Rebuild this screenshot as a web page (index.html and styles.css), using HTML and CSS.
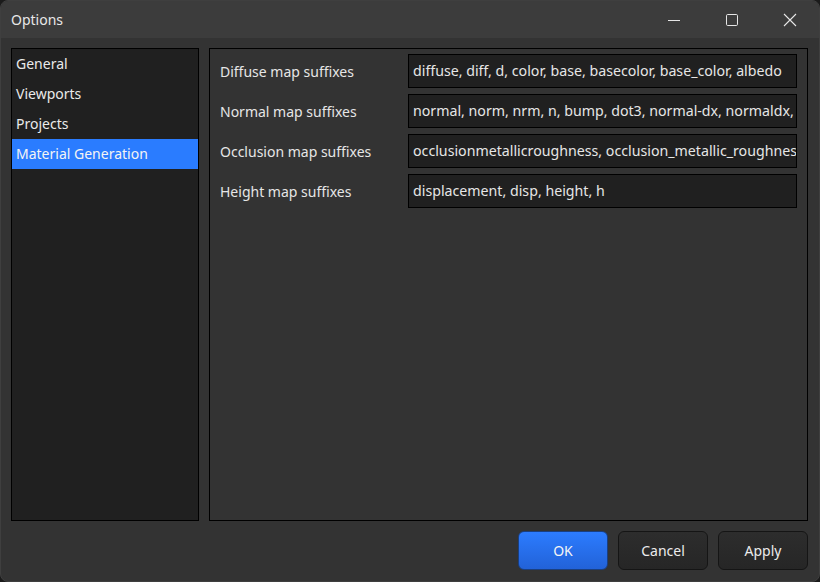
FILE: index.html
```html
<!DOCTYPE html>
<html>
<head>
<meta charset="utf-8">
<link rel="stylesheet" href="styles.css">
</head>
<body>
<div class="window">
  <div class="titlebar">
    <span class="title">Options</span>
    <div class="controls">
      <span class="ctl"><svg width="14" height="14" viewBox="0 0 14 14"><path d="M1 7.5H13" stroke="#e6e6e6" stroke-width="1" fill="none"/></svg></span>
      <span class="ctl"><svg width="14" height="14" viewBox="0 0 14 14"><rect x="1.5" y="1.5" width="11" height="11" rx="1.2" stroke="#e6e6e6" stroke-width="1" fill="none"/></svg></span>
      <span class="ctl"><svg width="14" height="14" viewBox="0 0 14 14"><path d="M1 1L13 13M13 1L1 13" stroke="#e6e6e6" stroke-width="1.1" fill="none"/></svg></span>
    </div>
  </div>
  <div class="content">
    <ul class="nav">
      <li>General</li>
      <li>Viewports</li>
      <li>Projects</li>
      <li class="selected">Material Generation</li>
    </ul>
    <div class="panel">
      <div class="form">
        <label>Diffuse map suffixes</label>
        <div class="field">diffuse, diff, d, color, base, basecolor, base_color, albedo</div>
        <label>Normal map suffixes</label>
        <div class="field">normal, norm, nrm, n, bump, dot3, normal-dx, normaldx, normal_dx</div>
        <label>Occlusion map suffixes</label>
        <div class="field">occlusionmetallicroughness, occlusion_metallic_roughness, orm</div>
        <label>Height map suffixes</label>
        <div class="field">displacement, disp, height, h</div>
      </div>
    </div>
  </div>
  <div class="footer">
    <button class="btn primary">OK</button>
    <button class="btn">Cancel</button>
    <button class="btn">Apply</button>
  </div>
</div>
</body>
</html>
```
FILE: styles.css
```css
html, body {
  margin: 0;
  padding: 0;
  background: #1b1b1b;
}
body {
  font-family: "Noto Sans", "Open Sans", sans-serif;
  font-size: 14px;
  color: #e6e6e6;
}
.window {
  width: 820px;
  height: 582px;
  box-sizing: border-box;
  background: #333333;
  border-radius: 8px;
  overflow: hidden;
  display: flex;
  flex-direction: column;
  border: 1px solid #3f3f3f;
}
.titlebar {
  height: 37px;
  background: #3c3c3c;
  display: flex;
  align-items: center;
  justify-content: space-between;
  padding-left: 10px;
  flex: none;
}
.title {
  font-size: 14px;
  color: #e8e8e8;
}
.controls {
  display: flex;
  height: 100%;
}
.ctl {
  width: 58px;
  display: flex;
  align-items: center;
  justify-content: center;
}
.content {
  flex: 1;
  display: flex;
  gap: 10px;
  padding: 10px 11px 0 10px;
  min-height: 0;
}
.nav {
  list-style: none;
  margin: 0;
  padding: 0;
  width: 188px;
  box-sizing: border-box;
  background: #202020;
  border: 1px solid #000;
  flex: none;
}
.nav li {
  height: 30px;
  line-height: 30px;
  padding-left: 4px;
  color: #eaeaea;
}
.nav li.selected {
  background: #2a7cff;
  color: #f4f4f4;
}
.panel {
  flex: 1;
  border: 1px solid #000;
  background: #333333;
  padding: 5px 10px 0 10px;
}
.form {
  display: grid;
  grid-template-columns: 188px 1fr;
  grid-auto-rows: 34px;
  row-gap: 6px;
}
.form label {
  display: flex;
  align-items: center;
  color: #e6e6e6;
}
.field {
  box-sizing: border-box;
  background: #202020;
  border: 1px solid #000;
  padding-left: 4px;
  line-height: 32px;
  font-size: 14.2px;
  white-space: nowrap;
  overflow: hidden;
  color: #e6e6e6;
}
.footer {
  flex: none;
  height: 60px;
  display: flex;
  justify-content: flex-end;
  align-items: flex-start;
  gap: 10px;
  padding: 10px 11px 0 0;
  box-sizing: border-box;
}
.btn {
  width: 90px;
  height: 39px;
  border-radius: 6px;
  border: 1px solid #151515;
  background: linear-gradient(#2d2d2d, #262626);
  color: #ececec;
  font-family: inherit;
  font-size: 14px;
}
.btn.primary {
  background: linear-gradient(#2c7cff, #2262d8);
  border-color: #1a3f80;
  color: #f5f5f5;
}
```
